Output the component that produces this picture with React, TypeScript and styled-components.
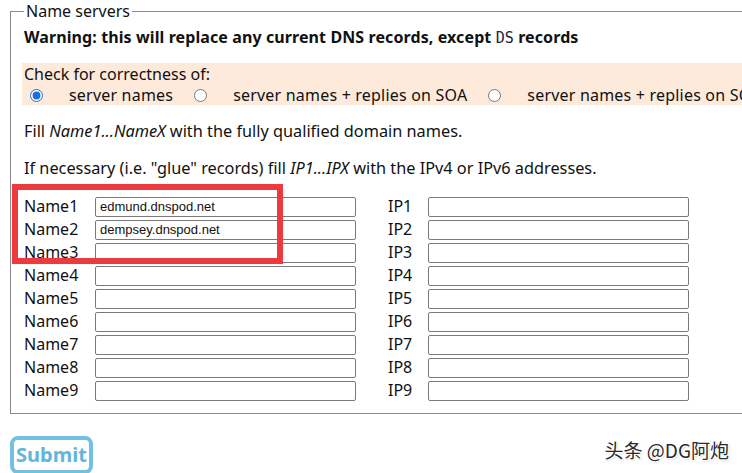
import styled, { createGlobalStyle } from "styled-components";

// estilos globais
const GlobalStyle = createGlobalStyle`
  * {
    box-sizing: border-box;
  }
  body {
    margin: 0;
    overflow: hidden;
    background: #ffffff;
    font-family: "Noto Sans", "Open Sans", sans-serif;
    color: #111;
  }
`;

const Page = styled.div`
  position: relative;
  width: 742px;
  height: 473px;
  padding: 0 0 0 10px;
  overflow: hidden;
`;

const Fieldset = styled.fieldset`
  width: 900px;
  margin: 0;
  border: 1px solid #8a8a8a;
  padding: 4px 12px 11px 13px;
  font-size: 16px;
  line-height: 22px;
`;

const Legend = styled.legend`
  padding: 0 2px;
  font-size: 16px;
  line-height: 22px;
`;

const Warning = styled.div`
  font-weight: bold;
  letter-spacing: 0.1px;
`;

const Mono = styled.span`
  font-family: "DejaVu Sans Mono", "Liberation Mono", monospace;
  font-weight: normal;
  font-size: 15px;
  color: #20203a;
`;

// caixa bege com as opções de verificação
const CheckBox = styled.div`
  margin: 14px 0 0 -2px;
  padding: 1px 0 0 2px;
  background: #fdeadb;
  height: 42px;
  line-height: 21px;
`;

const RadioRow = styled.div`
  display: flex;
  align-items: center;
  white-space: nowrap;
`;

const Radio = styled.input`
  width: 13px;
  height: 13px;
  margin: 0 26px 0 ${(p: { $first?: boolean }) => (p.$first ? "6px" : "0")};
  accent-color: #1a6fe0;
`;

const RadioLabel = styled.span`
  margin-right: 21px;
  letter-spacing: 0.2px;
`;

const Para = styled.p`
  margin: 15px 0 0;
  font-size: 16.3px;
`;

// grade dos servidores
const Grid = styled.div`
  display: grid;
  grid-template-columns: 71px 261px 32px 40px 261px;
  grid-auto-rows: 23px;
  align-items: center;
  margin-top: 16px;
`;

const Label = styled.span`
  grid-column: ${(p: { $col: number }) => p.$col};
  line-height: 23px;
`;

const Field = styled.input`
  grid-column: ${(p: { $col: number }) => p.$col};
  height: 20px;
  width: 261px;
  margin: 0;
  padding: 0 4px;
  border: 1px solid #7a7a7a;
  border-radius: 2px;
  font-family: "Liberation Sans", Arial, sans-serif;
  font-size: 13px;
  color: #111;
  background: #fff;
`;

// destaque vermelho
const Highlight = styled.div`
  position: absolute;
  left: 12px;
  top: 184px;
  width: 271px;
  height: 80px;
  border: 6px solid #ee3a3d;
  pointer-events: none;
`;

const Submit = styled.button`
  margin-top: 22px;
  height: 38px;
  padding: 0 2px;
  border: 4px solid #72c1e4;
  border-radius: 8px;
  background: #fff;
  color: #64b5dd;
  font-family: "Noto Sans", "Open Sans", sans-serif;
  font-weight: bold;
  font-size: 20px;
  line-height: 28px;
`;

const Watermark = styled.div`
  position: absolute;
  right: 13px;
  bottom: 10px;
  font-family: "Noto Sans CJK SC", "Noto Sans", sans-serif;
  font-size: 19px;
  color: #2a2a2a;
  text-shadow: 1px 1px 0 #fff, -1px -1px 0 #fff, 1px -1px 0 #fff, -1px 1px 0 #fff,
    1px 1px 2px rgba(0, 0, 0, 0.35);
`;

const names = ["edmund.dnspod.net", "dempsey.dnspod.net", "", "", "", "", "", "", ""];

const App = () => {
  return (
    <>
      <GlobalStyle />
      <Page>
        <Fieldset>
          <Legend>Name servers</Legend>
          <Warning>
            Warning: this will replace any current DNS records, except <Mono>DS</Mono> records
          </Warning>
          <CheckBox>
            <div>Check for correctness of:</div>
            <RadioRow>
              <Radio type="radio" name="check" $first defaultChecked />
              <RadioLabel>server names</RadioLabel>
              <Radio type="radio" name="check" />
              <RadioLabel>server names + replies on SOA</RadioLabel>
              <Radio type="radio" name="check" />
              <RadioLabel>server names + replies on SOA and NS</RadioLabel>
            </RadioRow>
          </CheckBox>
          <Para>
            Fill <i>Name1...NameX</i> with the fully qualified domain names.
          </Para>
          <Para>
            If necessary (i.e. "glue" records) fill <i>IP1...IPX</i> with the IPv4 or IPv6 addresses.
          </Para>
          <Grid>
            {names.map((n, i) => (
              <>
                <Label key={"l" + i} $col={1}>Name{i + 1}</Label>
                <Field key={"n" + i} $col={2} defaultValue={n} />
                <Label key={"p" + i} $col={4}>IP{i + 1}</Label>
                <Field key={"i" + i} $col={5} />
              </>
            ))}
          </Grid>
        </Fieldset>
        <Submit>Submit</Submit>
        <Highlight />
        <Watermark>头条 @DG阿炮</Watermark>
      </Page>
    </>
  );
};

export default App;
